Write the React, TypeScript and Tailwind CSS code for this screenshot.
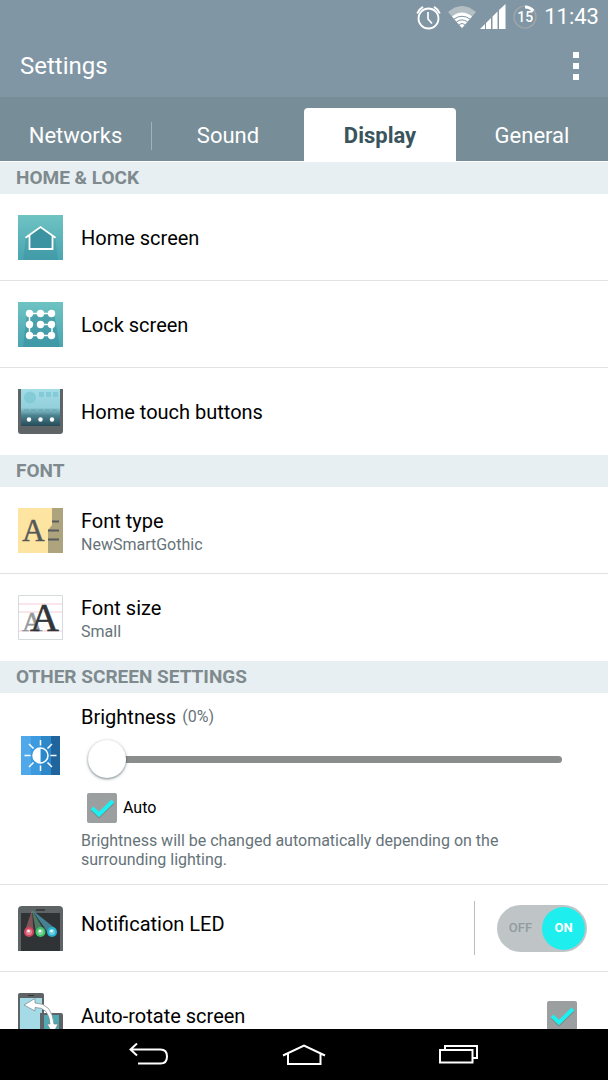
import { useState, type ReactNode } from "react";

function StatusBar() {
  return (
    <div className="flex h-[34px] items-center justify-end gap-[7px] pr-[9px] text-white">
      <svg width="25" height="26" viewBox="0 0 25 26" fill="none" stroke="currentColor" aria-hidden="true">
        <circle cx="12.5" cy="14.5" r="10" strokeWidth="1.8" />
        <path d="M12 8v7l4 4.5" strokeWidth="1.7" />
        <path d="M1.2 9.5Q3 5 7 2.8M23.8 9.5Q22 5 18 2.8" strokeWidth="2" />
      </svg>
      <div className="flex gap-1">
        <svg width="28" height="26" viewBox="0 0 28 26" aria-hidden="true">
          <path d="M0 8Q14-4 28 8L14 24Z" fill="#b4bfc3" />
          <path d="M4 12.5Q14 4.5 24 12.5L14 24Z" fill="#fff" />
          <path
            d="M6 15Q14 9.5 22 15M8.5 17.8Q14 14 19.5 17.8M11 20.5Q14 18.5 17 20.5"
            fill="none"
            stroke="#8096a4"
            strokeWidth="1"
          />
        </svg>
        <svg width="26" height="26" viewBox="0 0 26 26" fill="#fff" aria-hidden="true">
          <path d="M0 25L5 20V25ZM6 19L11 14V25H6ZM12.5 12.5L17.5 7.5V25H12.5ZM19 6L25.5 0V25H19Z" />
        </svg>
      </div>
      <div className="relative flex h-6 w-6 items-center justify-center">
        <svg className="absolute inset-0" width="24" height="24" viewBox="0 0 24 24" fill="none" aria-hidden="true">
          <circle cx="12" cy="12" r="11" stroke="#a0a8aa" strokeWidth="1.2" />
          <path d="M12 2Q17 2 20.3 6" stroke="#fff" strokeWidth="3" />
        </svg>
        <span className="text-sm leading-6 font-medium">15</span>
      </div>
      <span className="text-[22px] leading-[34px]">11:43</span>
    </div>
  );
}

const tabs = ["Networks", "Sound", "Display", "General"];

function Tabs() {
  const [active, setActive] = useState("Display");
  return (
    <div
      role="tablist"
      className="flex h-[65px] items-stretch border-b border-white bg-[#778d97] pt-[11px] text-[22px] text-white"
    >
      {tabs.map((tab, i) => (
        <button
          key={tab}
          type="button"
          role="tab"
          aria-selected={tab === active}
          onClick={() => setActive(tab)}
          className={
            tab === active
              ? "flex-1 rounded-t bg-white pt-0.5 font-bold text-[#3a545d]"
              : "flex flex-1 items-center pt-0.5 text-center"
          }
        >
          {tab === active ? (
            tab
          ) : (
            <span className={i === 0 ? "flex-1 border-r border-[#a3b2b8] leading-7" : "flex-1 leading-7"}>{tab}</span>
          )}
        </button>
      ))}
    </div>
  );
}

function SectionTitle({ children }: { children: ReactNode }) {
  return (
    <h2 className="h-8 bg-[#e7eff2] px-4 text-[19px] leading-8 font-bold text-[#7f8a8e]">{children}</h2>
  );
}

function Row({
  icon,
  title,
  desc,
  last,
  raised,
  children,
}: {
  icon: ReactNode;
  title: string;
  desc?: string;
  last?: boolean;
  raised?: boolean;
  children?: ReactNode;
}) {
  return (
    <li
      className={
        last
          ? "flex h-[87px] items-center gap-[18px] pl-[18px]"
          : "flex h-[87px] items-center gap-[18px] border-b border-[#dfe3e4] pl-[18px]"
      }
    >
      {icon}
      <div className={raised ? "flex-1 pb-2" : last ? "flex-1" : "flex-1 pt-0.5"}>
        <h3 className="text-xl leading-7">{title}</h3>
        {desc && <p className="text-base leading-5 text-[#667379]">{desc}</p>}
      </div>
      {children}
    </li>
  );
}

function CheckBox({ id, label }: { id: string; label?: string }) {
  return (
    <span className="relative block h-[30px] w-[30px]">
      <input
        id={id}
        type="checkbox"
        defaultChecked
        aria-label={label}
        className="peer block h-[30px] w-[30px] appearance-none rounded-xs bg-[#9c9f9f]"
      />
      <svg
        className="pointer-events-none absolute inset-0 hidden peer-checked:block"
        width="30"
        height="30"
        viewBox="0 0 30 30"
        fill="none"
        aria-hidden="true"
      >
        <path d="M5 16L12 22.700L26 9.300" stroke="#7d8686" strokeWidth="4" />
        <path d="M5 15L12 21.500L26 8" stroke="#1df0f0" strokeWidth="4" />
      </svg>
    </span>
  );
}

function Switch({ label }: { label: string }) {
  const [on, setOn] = useState(true);
  return (
    <button
      type="button"
      role="switch"
      aria-checked={on}
      aria-label={label}
      onClick={() => setOn(!on)}
      className="flex h-[47px] w-[90px] items-center justify-between rounded-full bg-[#bfc5c6] p-0.5 text-[13px] font-bold"
    >
      <span
        className={
          on
            ? "flex h-[43px] w-[43px] items-center justify-center font-medium text-[#929b9e]"
            : "flex h-[43px] w-[43px] items-center justify-center rounded-full bg-white text-[#929b9e]"
        }
      >
        OFF
      </span>
      <span
        className={
          on
            ? "flex h-[43px] w-[43px] items-center justify-center rounded-full bg-[#1feeee] text-white"
            : "flex h-[43px] w-[43px] items-center justify-center font-medium text-[#929b9e]"
        }
      >
        ON
      </span>
    </button>
  );
}

function TealGradient({ id }: { id: string }) {
  return (
    <linearGradient id={id} x1="0" y1="0" x2="0" y2="1">
      <stop offset="0" stopColor="#6ec3c2" />
      <stop offset="1" stopColor="#4aa5b1" />
    </linearGradient>
  );
}

function HomeIcon() {
  return (
    <svg width="45" height="45" viewBox="0 0 45 45" aria-hidden="true">
      <defs>
        <TealGradient id="home-bg" />
      </defs>
      <path d="M0 0H45V45H0Z" fill="url(#home-bg)" />
      <path d="M8 22L5 45H40L37 22L22.5 12Z" fill="#338c9c" opacity=".35" />
      <path d="M11.5 20V34H34.5V20L22.5 12Z" fill="#3b93a2" />
      <path d="M7.5 22.8L22.5 12L37.5 22.8M11.5 20.5V34H34.5V20.5" fill="none" stroke="#fff" strokeWidth="1.8" />
    </svg>
  );
}

function LockIcon() {
  return (
    <svg width="45" height="45" viewBox="0 0 45 45" aria-hidden="true">
      <defs>
        <TealGradient id="lock-bg" />
      </defs>
      <path d="M0 0H45V45H0Z" fill="url(#lock-bg)" />
      <path d="M9 11L5 45H42L36 11Z" fill="#338c9c" opacity=".5" />
      <path d="M34 11.5H11.5V33.5H34V22.5H22.5" fill="none" stroke="#fff" strokeWidth="1.5" />
      {[11.5, 22.5, 33.5].map((y) =>
        [11.5, 22.5, 33.5].map((x) => <circle key={`${x}-${y}`} cx={x} cy={y} r="3.7" fill="#fff" />)
      )}
    </svg>
  );
}

function TouchButtonsIcon() {
  return (
    <svg width="45" height="45" viewBox="0 0 45 45" aria-hidden="true">
      <defs>
        <linearGradient id="touch-bg" x1="0" y1="0" x2="0" y2="1">
          <stop offset="0" stopColor="#a3dde7" />
          <stop offset=".5" stopColor="#93d0dc" />
          <stop offset=".72" stopColor="#4b818f" />
          <stop offset="1" stopColor="#264b58" />
        </linearGradient>
      </defs>
      <path d="M0 0H45V42Q45 45 42 45H3Q0 45 0 42Z" fill="#5f6467" />
      <path d="M3 0H42V37H3Z" fill="url(#touch-bg)" />
      <g fill="#7bc7d3" opacity=".75">
        <circle cx="12" cy="8.5" r="6" />
        <path d="M21 3H26V8H21ZM28 3H33V8H28ZM35 3H40V8H35Z" />
      </g>
      <path d="M6 22H40" stroke="#6baab5" strokeWidth="4" strokeDasharray="5 2" opacity=".7" />
      <g fill="#fff">
        <circle cx="11" cy="30.5" r="2.2" />
        <circle cx="22.5" cy="30.5" r="2.2" />
        <circle cx="34" cy="30.5" r="2.2" />
      </g>
    </svg>
  );
}

function FontTypeIcon() {
  return (
    <svg width="45" height="45" viewBox="0 0 45 45" aria-hidden="true">
      <path d="M0 0H45V45H0Z" fill="#fde4a0" />
      <path d="M34 0H45V45H30V22L34 17Z" fill="#ada37c" />
      <path d="M34 13.5H41M30 22.5H41M30 31.5H41" stroke="#595b5e" strokeWidth="2" />
      <text x="15.5" y="32.5" textAnchor="middle" fontSize="31" fontFamily="Liberation Serif, serif" fill="#55585b" stroke="#55585b" strokeWidth=".5">
        A
      </text>
    </svg>
  );
}

function FontSizeIcon() {
  return (
    <svg width="45" height="45" viewBox="0 0 45 45" aria-hidden="true">
      <path d="M.5.5H44.5V44.5H.5Z" fill="#fff" stroke="#d5dadc" />
      <path d="M1 9H44M1 17H44M1 36H44" stroke="#f1c0ce" strokeWidth=".8" />
      <text x="14" y="36" textAnchor="middle" fontSize="28" fontFamily="Liberation Serif, serif" fill="#92989b" stroke="#92989b" strokeWidth=".5">
        A
      </text>
      <text x="26.5" y="36" textAnchor="middle" fontSize="40" fontFamily="Liberation Serif, serif" fill="#303538" stroke="#303538" strokeWidth=".6">
        A
      </text>
    </svg>
  );
}

function BrightnessIcon() {
  return (
    <svg width="45" height="39" viewBox="0 0 45 39" aria-hidden="true">
      <path d="M3 0H13V39H3Z" fill="#4ea8ea" />
      <path d="M13 0H23V39H13Z" fill="#3e9ade" />
      <path d="M23 0H33V39H23Z" fill="#2d88ca" />
      <path d="M33 0H42V39H33Z" fill="#1f649c" />
      <circle cx="22.5" cy="19.5" r="7.5" fill="none" stroke="#fff" strokeWidth="1.5" />
      <path d="M22.5 12A7.5 7.5 0 0 0 22.5 27Z" fill="#fff" />
      <path
        d="M22.5 4V9.5M22.5 29.5V35M6.5 19.5H12.5M32.5 19.5H38.5M11 8L15.5 12.5M29.5 26.5L34 31M34 8L29.5 12.5M15.5 26.5L11 31"
        stroke="#fff"
        strokeWidth="1.5"
      />
    </svg>
  );
}

function LedIcon() {
  const leds = [
    { x: 11, color: "#d3465f" },
    { x: 22.5, color: "#3fc36a" },
    { x: 34, color: "#25b5d3" },
  ];
  return (
    <svg width="45" height="45" viewBox="0 0 45 45" aria-hidden="true">
      <path d="M0 45V4Q0 0 4 0H41Q45 0 45 4V45Z" fill="#5e6366" />
      <path d="M3 7H42V45H3Z" fill="#303335" />
      <path d="M18 4H27" stroke="#303335" strokeWidth="1.5" />
      <path d="M14 4L6.5 26H15.5Z" fill="#b06b70" opacity=".6" />
      <path d="M14 4L18 26H27Z" fill="#61a984" opacity=".6" />
      <path d="M14 4L29.5 26L38 23Z" fill="#4b9eb3" opacity=".75" />
      {leds.map(({ x, color }) => (
        <g key={color}>
          <circle cx={x} cy="26" r="5" fill={color} />
          <circle cx={x} cy="26" r="3" fill="#fff" opacity=".35" />
          <circle cx={x - 0.5} cy="25" r="1.3" fill="#fff" />
        </g>
      ))}
    </svg>
  );
}

function RotateIcon() {
  return (
    <svg width="45" height="45" viewBox="0 0 45 45" aria-hidden="true">
      <path d="M0 45V2Q0 0 2 0H24Q26 0 26 2V45Z" fill="#5e6366" />
      <path d="M2 5H24V45H2Z" fill="#a5dbe6" />
      <path d="M10 2.5H16" stroke="#303335" />
      <path d="M22 20H43Q45 20 45 22V45H22Z" fill="#5e6366" />
      <path d="M26 22H41V45H26Z" fill="#4fa9b2" />
      <path
        d="M6 12L17 5.5V10Q34 10 36 31H40L35 41L29 31H32Q31 14 17 14.5V18Z"
        fill="#fff"
        stroke="#738489"
        strokeWidth=".7"
      />
    </svg>
  );
}

function BrightnessRow() {
  const [value, setValue] = useState(0);
  return (
    <li className="flex gap-[18px] border-b border-[#dfe3e4] pt-2.5 pb-[15px] pl-[18px]">
      <div className="pt-[33px]">
        <BrightnessIcon />
      </div>
      <div className="flex-1 pr-[46px]">
        <div className="flex items-center gap-1.5">
          <label htmlFor="brightness" className="text-xl leading-7">
            Brightness
          </label>
          <span className="text-base leading-7 text-[#667379]">({value}%)</span>
        </div>
        <div className="mt-[9px] pl-[7px]">
          <input
            id="brightness"
            type="range"
            min={0}
            max={100}
            value={value}
            onChange={(e) => setValue(Number(e.target.value))}
            className="block h-[38px] w-full appearance-none bg-transparent [&::-webkit-slider-runnable-track]:h-[7px] [&::-webkit-slider-runnable-track]:rounded-full [&::-webkit-slider-runnable-track]:bg-[#8b8c8c] [&::-webkit-slider-thumb]:-mt-4 [&::-webkit-slider-thumb]:h-[38px] [&::-webkit-slider-thumb]:w-[38px] [&::-webkit-slider-thumb]:appearance-none [&::-webkit-slider-thumb]:rounded-full [&::-webkit-slider-thumb]:bg-white [&::-webkit-slider-thumb]:shadow-[0_1px_3px_rgba(50,70,80,0.7)]"
          />
        </div>
        <div className="mt-[15px] flex items-center gap-1.5 pl-1.5">
          <CheckBox id="auto-brightness" />
          <label htmlFor="auto-brightness" className="text-base">
            Auto
          </label>
        </div>
        <p className="mt-2 text-base leading-[19px] text-[#667379]">
          Brightness will be changed automatically depending on the surrounding lighting.
        </p>
      </div>
    </li>
  );
}

function NavBar() {
  return (
    <nav className="flex h-[51px] shrink-0 items-center justify-center gap-[113px] bg-black text-white">
      <button type="button" aria-label="Back">
        <svg width="42" height="26" viewBox="0 0 42 26" fill="none" stroke="currentColor" strokeWidth="2">
          <path d="M10 1.5L3.5 7.5L10 13.5M3.5 7.5H33.5Q40 7.5 40 14.5T33.5 21.5H11" />
        </svg>
      </button>
      <button type="button" aria-label="Home">
        <svg width="44" height="26" viewBox="0 0 44 26" fill="none" stroke="currentColor" strokeWidth="2">
          <path d="M1 13.5L22 3.5L43 13.5M6 11.5V22H38.5V11.5" />
        </svg>
      </button>
      <button type="button" aria-label="Recent apps">
        <svg width="42" height="26" viewBox="0 0 42 26" fill="none" stroke="currentColor" strokeWidth="2">
          <path d="M1 8H33.5V20.5H1ZM6 8V4H38V16H33.5" />
        </svg>
      </button>
    </nav>
  );
}

export default function App() {
  return (
    <div className="flex h-screen flex-col overflow-hidden bg-white font-['Roboto',sans-serif] text-black">
      <header className="shrink-0 bg-[#8096a4]">
        <StatusBar />
        <div className="flex h-[63px] items-center justify-between pr-[29px] pl-5 text-white">
          <h1 className="text-2xl">Settings</h1>
          <button type="button" aria-label="More options" className="flex flex-col gap-[5px]">
            <span className="h-1.5 w-1.5 bg-white" />
            <span className="h-1.5 w-1.5 bg-white" />
            <span className="h-1.5 w-1.5 bg-white" />
          </button>
        </div>
        <Tabs />
      </header>

      <main className="min-h-0 flex-1 overflow-hidden">
        <SectionTitle>HOME &amp; LOCK</SectionTitle>
        <ul>
          <Row icon={<HomeIcon />} title="Home screen" />
          <Row icon={<LockIcon />} title="Lock screen" />
          <Row icon={<TouchButtonsIcon />} title="Home touch buttons" last />
        </ul>
        <SectionTitle>FONT</SectionTitle>
        <ul>
          <Row icon={<FontTypeIcon />} title="Font type" desc="NewSmartGothic" />
          <Row icon={<FontSizeIcon />} title="Font size" desc="Small" last />
        </ul>
        <SectionTitle>OTHER SCREEN SETTINGS</SectionTitle>
        <ul>
          <BrightnessRow />
          <Row icon={<LedIcon />} title="Notification LED" raised>
            <div className="flex h-[54px] items-center border-l border-[#b9bdbe] pr-[21px] pl-[22px]">
              <Switch label="Notification LED" />
            </div>
          </Row>
          <Row icon={<RotateIcon />} title="Auto-rotate screen" last>
            <div className="pr-[31px]">
              <CheckBox id="auto-rotate" label="Auto-rotate screen" />
            </div>
          </Row>
        </ul>
      </main>

      <NavBar />
    </div>
  );
}
